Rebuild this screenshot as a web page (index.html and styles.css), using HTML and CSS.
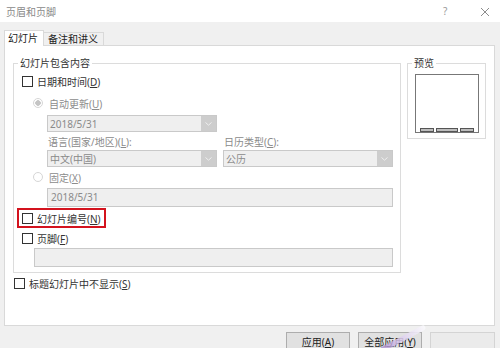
FILE: index.html
```html
<!DOCTYPE html>
<html lang="zh-CN">
<head>
    <meta charset="UTF-8">
    <title>页眉和页脚</title>
    <link rel="stylesheet" href="styles.css">
</head>
<body>
    <div class="titlebar">
        <span class="title">页眉和页脚</span>
        <span class="help">?</span>
        <span class="close">
            <svg width="10" height="10" viewBox="0 0 10 10"><path d="M1 1L9 9M9 1L1 9" stroke="#8c8c8c" stroke-width="1" fill="none"/></svg>
        </span>
    </div>

    <div class="tabs">
        <div class="tab active">幻灯片</div>
        <div class="tab">备注和讲义</div>
    </div>

    <div class="panel">
        <div class="groups">
            <fieldset class="group main">
                <legend>幻灯片包含内容</legend>
                <div class="check"><span class="box"></span><span>日期和时间(<u>D</u>)</span></div>
                <div class="radio first"><span class="dot checked"></span><span>自动更新(<u>U</u>)</span></div>
                <div class="select date">
                    <span class="value">2018/5/31</span>
                    <span class="arrow"><svg width="7" height="4" viewBox="0 0 7 4"><path d="M0.5 0.5L3.5 3.2L6.5 0.5" stroke="#eeeeee" fill="none"/></svg></span>
                </div>
                <div class="pair labels">
                    <span>语言(国家/地区)(<u>L</u>):</span>
                    <span>日历类型(<u>C</u>):</span>
                </div>
                <div class="pair selects">
                    <div class="select lang">
                        <span class="value">中文(中国)</span>
                        <span class="arrow"><svg width="7" height="4" viewBox="0 0 7 4"><path d="M0.5 0.5L3.5 3.2L6.5 0.5" stroke="#eeeeee" fill="none"/></svg></span>
                    </div>
                    <div class="select cal">
                        <span class="value">公历</span>
                        <span class="arrow"><svg width="7" height="4" viewBox="0 0 7 4"><path d="M0.5 0.5L3.5 3.2L6.5 0.5" stroke="#eeeeee" fill="none"/></svg></span>
                    </div>
                </div>
                <div class="radio second"><span class="dot"></span><span>固定(<u>X</u>)</span></div>
                <div class="textbox fixed">2018/5/31</div>
                <div class="check highlight"><span class="box"></span><span>幻灯片编号(<u>N</u>)</span></div>
                <div class="check footer-check"><span class="box"></span><span>页脚(<u>F</u>)</span></div>
                <div class="textbox footer"></div>
            </fieldset>

            <fieldset class="group preview">
                <legend>预览</legend>
                <div class="slide">
                    <span class="ph small"></span>
                    <span class="ph wide"></span>
                    <span class="ph small"></span>
                </div>
            </fieldset>
        </div>

        <div class="check title-hide"><span class="box"></span><span>标题幻灯片中不显示(<u>S</u>)</span></div>
    </div>

    <div class="buttons">
        <div class="btn">应用(<u>A</u>)</div>
        <div class="btn">全部应用(<u>Y</u>)</div>
        <div class="btn faded"></div>
        <span class="streak"></span>
    </div>
</body>
</html>
```

FILE: styles.css
```css
body {
    margin: 0;
    background-color: #f0f0f0;
    font-family: "Noto Sans", "Noto Sans CJK SC", sans-serif;
    font-size: 10px;
    color: #333;
    overflow: hidden;
}

u {
    text-decoration: underline;
    text-underline-offset: 1px;
}

.titlebar {
    height: 22px;
    background-color: #fff;
    display: flex;
    align-items: center;
    padding: 0 0 0 6px;
    color: #8a8a8a;
}

.title {
    flex: 1;
}

.help {
    width: 37px;
    font-size: 10px;
    color: #999;
}

.close {
    width: 20px;
    display: flex;
    align-items: center;
    padding-top: 1px;
}

/* Tabs */
.tabs {
    display: flex;
    align-items: flex-end;
    height: 15px;
    margin-top: 8px;
    padding-left: 4px;
}

.tab {
    height: 13px;
    line-height: 12px;
    padding: 0 5px 0 4px;
    border: 1px solid #d9d9d9;
    border-left: none;
    border-bottom: none;
    box-sizing: border-box;
    background-color: #f0f0f0;
    color: #222;
}

.tab.active {
    height: 16px;
    line-height: 14px;
    margin-bottom: -1px;
    padding: 0 5px 0 3px;
    border-left: 1px solid #d9d9d9;
    background-color: #fff;
    position: relative;
    z-index: 1;
}

/* Panel */
.panel {
    height: 281px;
    margin: 0 5px 0 4px;
    padding: 10px 0 0 8px;
    background-color: #fff;
    border: 1px solid #d9d9d9;
    box-sizing: border-box;
}

.groups {
    display: flex;
    align-items: flex-start;
}

.group {
    margin: 0;
    padding: 0;
    border: 1px solid #dcdcdc;
    box-sizing: border-box;
    min-width: 0;
}

.group legend {
    padding: 0 2px;
    line-height: 14px;
    color: #333;
}

.main {
    width: 388px;
    padding: 3px 0 5px 0;
}

.main legend {
    margin-left: 4px;
}

.preview {
    width: 79px;
    margin-left: 6px;
    padding: 4px 0 5px 7px;
}

.preview legend {
    margin-left: -3px;
}

.slide {
    width: 64px;
    height: 59px;
    border: 1px solid #777;
    box-sizing: border-box;
    display: flex;
    align-items: flex-end;
    gap: 2px;
    padding: 0 3px 0 4px;
}

.ph {
    height: 4px;
    border: 1px solid #555;
    background-color: #bdbdbd;
    box-sizing: border-box;
}

.ph.small {
    width: 14px;
}

.ph.wide {
    width: 22px;
}

/* Checkboxes and radios */
.check {
    display: flex;
    align-items: center;
    gap: 4px;
    height: 16px;
    padding-left: 8px;
}

.box {
    width: 11px;
    height: 11px;
    border: 1px solid #333;
    box-sizing: border-box;
    background-color: #fff;
}

.radio {
    display: flex;
    align-items: center;
    gap: 6px;
    height: 16px;
    padding-left: 19px;
    color: #8c8c8c;
}

.radio.first {
    margin-top: 6px;
}

.radio.second {
    margin-top: 2px;
}

.dot {
    width: 10px;
    height: 10px;
    border: 1px solid #d6d6d6;
    border-radius: 50%;
    box-sizing: border-box;
    background-color: #fff;
}

.dot.checked {
    background: radial-gradient(circle, #c4c4c4 0, #c4c4c4 2.5px, #fff 3px);
}

/* Disabled fields */
.select {
    display: flex;
    align-items: center;
    height: 17px;
    border: 1px solid #c9c9c9;
    background-color: #efefef;
    box-sizing: border-box;
    color: #8a8a8a;
}

.select .value {
    flex: 1;
    padding-left: 2px;
}

.select .arrow {
    width: 15px;
    height: 100%;
    background-color: #cdcdcd;
    display: flex;
    align-items: center;
    justify-content: center;
}

.select.date {
    width: 170px;
    margin: 4px 0 0 33px;
}

.pair {
    display: flex;
    gap: 6px;
    margin-left: 33px;
}

.pair.labels {
    height: 14px;
    line-height: 14px;
    margin-top: 3px;
    color: #8a8a8a;
}

.pair.labels span {
    width: 169px;
    padding-left: 1px;
}

.pair.selects {
    margin-top: 1px;
}

.select.lang {
    width: 170px;
}

.select.cal {
    width: 170px;
}

.textbox {
    height: 19px;
    line-height: 17px;
    border: 1px solid #c9c9c9;
    background-color: #efefef;
    box-sizing: border-box;
    color: #8a8a8a;
    padding-left: 3px;
}

.textbox.fixed {
    width: 346px;
    margin: 3px 0 0 33px;
}

.check.highlight {
    width: fit-content;
    height: 20px;
    margin: 1px 0 0 3px;
    padding: 0 3px 0 3px;
    border: 2px solid #d3131e;
    box-sizing: border-box;
}

.footer-check {
    margin-top: 2px;
}

.textbox.footer {
    width: 359px;
    margin: 2px 0 0 20px;
}

.check.title-hide {
    margin: 2px 0 0 1px;
    padding-left: 0;
}

/* Bottom buttons */
.buttons {
    display: flex;
    justify-content: flex-end;
    gap: 8px;
    margin-top: 6px;
    padding-right: 5px;
    position: relative;
}

.btn {
    width: 64px;
    height: 22px;
    line-height: 18px;
    text-align: center;
    background-color: #e1e1e1;
    border: 1px solid #adadad;
    box-sizing: border-box;
    color: #222;
}

.btn.faded {
    width: 65px;
    background-color: #ebebeb;
    border-color: #d4d4d4;
}

.streak {
    position: absolute;
    left: 378px;
    top: 4px;
    width: 50px;
    height: 5px;
    transform: rotate(-28deg);
    background: linear-gradient(90deg, rgba(160, 125, 205, 0.7), rgba(220, 205, 238, 0.85) 45%, rgba(250, 250, 252, 0.9));
    border-radius: 3px;
}
```
